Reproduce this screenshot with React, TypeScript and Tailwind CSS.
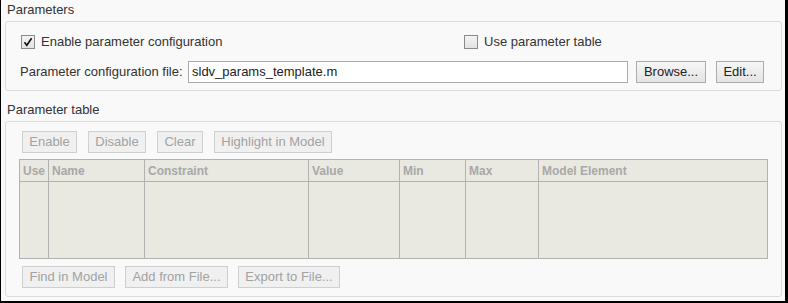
const font = "font-['Liberation_Sans',Arial,sans-serif]";

function CheckBox({ checked }: { checked?: boolean }) {
  return (
    <div className="w-[14px] h-[14px] border border-[#8a8a8a] bg-gradient-to-b from-[#f4f4f4] to-[#e2e2e2] flex items-center justify-center shrink-0">
      {checked && (
        <svg width="12" height="12" viewBox="0 0 12 12">
          <path d="M2.5 6.3 L4.8 9.3 L9.6 2.2" fill="none" stroke="#111" strokeWidth="1.6" />
        </svg>
      )}
    </div>
  );
}

function Btn({ label, w, disabled }: { label: string; w: string; disabled?: boolean }) {
  return (
    <div
      className={`${w} h-[22px] shrink-0 flex items-center justify-center text-[13px] border ${
        disabled
          ? 'border-[#cfcfcf] bg-[#f0f0f0] text-[#a2a2a2]'
          : 'border-[#acacac] bg-gradient-to-b from-[#f6f6f6] to-[#e4e4e4] text-[#222]'
      }`}
    >
      {label}
    </div>
  );
}

const columns = [
  { name: 'Use', w: 'w-[28px] border-l-0' },
  { name: 'Name', w: 'w-[96px]' },
  { name: 'Constraint', w: 'w-[164px]' },
  { name: 'Value', w: 'w-[91px]' },
  { name: 'Min', w: 'w-[66px]' },
  { name: 'Max', w: 'w-[73px]' },
  { name: 'Model Element', w: 'flex-1' },
];

export default function App() {
  return (
    <div className={`${font} w-[788px] h-[303px] bg-[#f9f9f9] border-l border-r-[3px] border-b-2 border-black flex flex-col text-[#333]`}>
      {/* Parameters */}
      <div className="h-[21px] pt-[2px] pl-[6px] text-[13px] leading-[16px]">Parameters</div>
      <div className="ml-[4px] mr-[3px] h-[70px] border border-[#dcdcdc] rounded-[3px] pt-[13px] pb-[7px] flex flex-col">
        <div className="h-[14px] flex items-center text-[13px]">
          <div className="w-[458px] pl-[15px] flex items-center gap-[6px]">
            <CheckBox checked />
            <span>Enable parameter configuration</span>
          </div>
          <div className="flex items-center gap-[6px]">
            <CheckBox />
            <span>Use parameter table</span>
          </div>
        </div>
        <div className="mt-[12px] h-[22px] flex items-center pl-[14px] text-[13px]">
          <span className="w-[168px] shrink-0">Parameter configuration file:</span>
          <div className="w-[440px] h-[22px] border border-[#aaaaaa] bg-white flex items-center pl-[3px] text-[#222]">
            sldv_params_template.m
          </div>
          <div className="ml-[8px] flex gap-[10px]">
            <Btn label="Browse..." w="w-[70px]" />
            <Btn label="Edit..." w="w-[48px]" />
          </div>
        </div>
      </div>

      {/* Parameter table */}
      <div className="h-[30px] pt-[11px] pl-[6px] text-[13px] leading-[16px]">Parameter table</div>
      <div className="ml-[4px] mr-[3px] h-[176px] border border-[#dcdcdc] rounded-[3px] pt-[9px] flex flex-col">
        <div className="pl-[16px] flex gap-[11px]">
          <Btn label="Enable" w="w-[55px]" disabled />
          <Btn label="Disable" w="w-[58px]" disabled />
          <Btn label="Clear" w="w-[46px]" disabled />
          <Btn label="Highlight in Model" w="w-[118px]" disabled />
        </div>
        <div className="ml-[13px] mt-[6px] w-[749px] h-[100px] border border-[#b2b2b2] bg-[#e9e8e1] flex">
          {columns.map((c) => (
            <div key={c.name} className={`${c.w} border-l border-[#b2b2b2] flex flex-col`}>
              <div className="h-[22px] border-b border-[#b2b2b2] pl-[3px] flex items-center text-[12px] font-bold text-[#a8a8a8]">
                {c.name}
              </div>
            </div>
          ))}
        </div>
        <div className="pl-[16px] mt-[7px] flex gap-[10px]">
          <Btn label="Find in Model" w="w-[93px]" disabled />
          <Btn label="Add from File..." w="w-[103px]" disabled />
          <Btn label="Export to File..." w="w-[102px]" disabled />
        </div>
      </div>
    </div>
  );
}
